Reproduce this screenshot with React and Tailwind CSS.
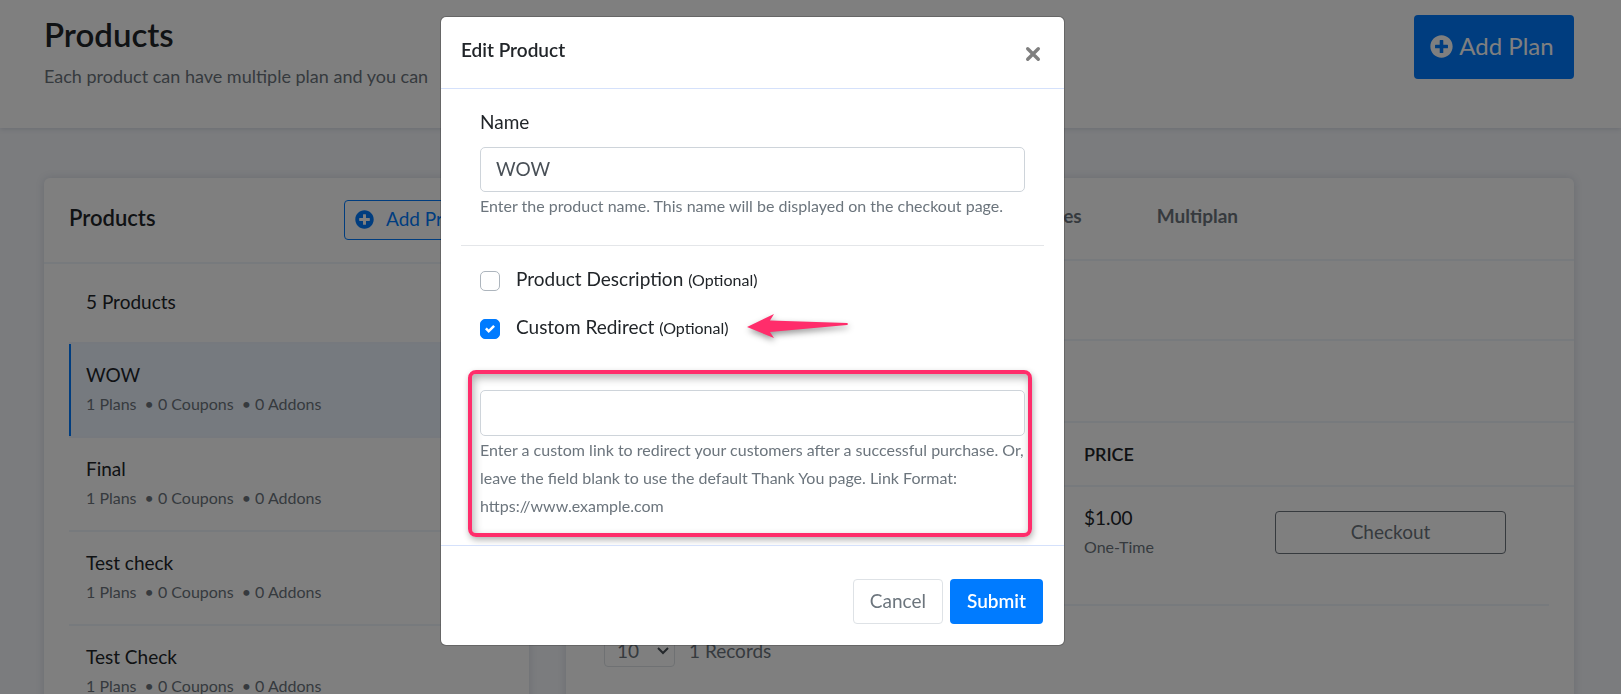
import React, { useState } from 'react'
import { FaPlusCircle } from 'react-icons/fa'

const products = ['WOW', 'Final', 'Test check', 'Test Check']
const tabs = ['Templates', 'Multiplan']

function ProductItem({ name, active, onSelect }) {
  return (
    <li className={active ? 'border-y-2 border-[#edf3fc] bg-[#edf4ff]' : 'border-b-2 border-[#eff4fb]'}>
      <button
        type="button"
        onClick={onSelect}
        className={`flex h-[92px] w-full flex-col justify-center border-l-2 pb-[2px] pl-[15px] text-left ${active ? 'border-[#007bff]' : 'border-transparent'}`}
      >
        <span className="text-[19px] leading-[30px] text-[#212529]">{name}</span>
        <span className="flex gap-2 text-base leading-7 text-[#6c757d]">
          <span>1 Plans</span>
          <span>• 0 Coupons</span>
          <span>• 0 Addons</span>
        </span>
      </button>
    </li>
  )
}

function ProductsCard() {
  const [selected, setSelected] = useState(0)

  return (
    <section className="rounded-md bg-white shadow-[0_0_8px_rgba(30,50,90,0.15)]">
      <div className="flex h-[86px] items-center justify-between border-b-2 border-[#eff4fb] px-[25px]">
        <h2 className="pb-[6px] text-[22px] font-semibold text-[#212529]">Products</h2>
        <button type="button" className="flex h-10 w-40 items-center gap-3 rounded border border-[#007bff] pb-[2px] pl-[10px] text-[19px] text-[#007bff]">
          <FaPlusCircle className="size-[19px]" />
          Add Product
        </button>
      </div>
      <div className="px-[25px]">
        <p className="flex h-[78px] items-center pb-[2px] pl-[17px] text-[19px] text-[#212529]">5 Products</p>
        <ul>
          {products.map((name, i) => (
            <ProductItem key={i} name={name} active={i === selected} onSelect={() => setSelected(i)} />
          ))}
        </ul>
      </div>
    </section>
  )
}

function PlansCard() {
  return (
    <section className="rounded-md bg-white shadow-[0_0_8px_rgba(30,50,90,0.15)]">
      <nav className="flex h-[83px] items-center justify-end gap-[75px] border-b-2 border-[#eff4fb] pr-[336px] pb-[5px] text-[19px] font-bold text-[#6c757d]">
        {tabs.map(tab => <a key={tab} href="#">{tab}</a>)}
      </nav>
      <div className="h-20 border-b-2 border-[#eff4fb]"></div>
      <div className="h-[82px] border-b-2 border-[#eff4fb]"></div>
      <table className="w-full table-fixed text-left text-[#212529]">
        <thead>
          <tr className="h-[63px] border-b-2 border-[#eff4fb] text-lg">
            <th></th>
            <th className="w-[191px] font-semibold">PRICE</th>
            <th className="w-[299px]"></th>
          </tr>
        </thead>
        <tbody>
          <tr className="h-[118px] align-top">
            <td></td>
            <td className="pt-4">
              <div className="text-[19px] leading-[30px]">$1.00</div>
              <div className="text-base leading-7 text-[#6c757d]">One-Time</div>
            </td>
            <td className="pt-6 pr-[68px]">
              <button type="button" className="h-[43px] w-full rounded border border-[#6c757d] text-[19px] text-[#6c757d]">Checkout</button>
            </td>
          </tr>
        </tbody>
      </table>
      <hr className="mx-[25px] border-t-2 border-[#eff4fb]" />
      <div className="flex items-center gap-[14px] px-[38px] pt-[29px] text-[19px] text-[#6c757d]">
        <div className="relative w-[71px]">
          <select aria-label="Records per page" defaultValue="10" className="h-8 w-full appearance-none rounded border border-[#dee2e6] pl-3 text-[#6c757d]">
            <option>10</option>
            <option>25</option>
          </select>
          <svg viewBox="0 0 12 8" className="pointer-events-none absolute top-3 right-[6px] w-3" fill="none" stroke="#495057" strokeWidth="2">
            <path d="M1 1l5 5 5-5" />
          </svg>
        </div>
        <span>1 Records</span>
      </div>
    </section>
  )
}

function CheckOption({ label, checked, onChange, children }) {
  return (
    <div className="flex h-12 items-center">
      <label className="flex items-center">
        <span className="relative mr-4 flex size-5">
          <input
            type="checkbox"
            checked={checked}
            onChange={onChange}
            className="size-5 appearance-none rounded-[5px] border border-[#adb5bd] bg-white checked:border-[#007bff] checked:bg-[#007bff]"
          />
          {checked && (
            <svg viewBox="0 0 8 8" className="pointer-events-none absolute top-[5px] left-[5px] size-[10px]" fill="#fff">
              <path d="M6.564.75l-3.59 3.612-1.538-1.55L0 4.26l2.974 2.99L8 2.193z" />
            </svg>
          )}
        </span>
        <span className="pb-[3px] text-[19px] text-[#212529]">{label} <span className="text-base">(Optional)</span></span>
      </label>
      {children}
    </div>
  )
}

function Arrow() {
  return (
    <svg viewBox="0 0 102 24" className="mb-[6px] ml-[18px] h-6 w-[102px] overflow-visible drop-shadow-[1px_3px_3px_rgba(0,0,0,0.4)]" fill="#ff2d6b">
      <path d="M0 13L27 0l-4 6.500L100 9q2 1 0 2L23 18l4 6z" />
    </svg>
  )
}

function EditProductModal() {
  const [name, setName] = useState('WOW')
  const [link, setLink] = useState('')
  const [description, setDescription] = useState(false)
  const [redirect, setRedirect] = useState(true)

  return (
    <div role="dialog" aria-labelledby="modal-title" className="w-full max-w-[625px] rounded-md border border-black/20 bg-white bg-clip-padding">
      <div className="flex h-[72px] items-center justify-between border-b border-[#d5e1fb] pr-[21px] pl-5">
        <h5 id="modal-title" className="pb-1 text-[19px] font-semibold text-[#212529]">Edit Product</h5>
        <button type="button" aria-label="Close" className="mt-[2px] flex size-5 items-center justify-center">
          <svg viewBox="0 0 16 16" className="size-4" stroke="#7f7f7f" strokeWidth="3.400" strokeLinecap="round">
            <path d="M2.700 2.700l10.600 10.600M13.300 2.700L2.700 13.300" />
          </svg>
        </button>
      </div>

      <form>
        <div className="px-5">
          <div className="border-b border-[#e4e6e9] px-[19px] pt-[18px] pb-[25px]">
            <label htmlFor="name" className="block pb-[10px] text-[19px] leading-[30px] text-[#212529]">Name</label>
            <input id="name" value={name} onChange={e => setName(e.target.value)} className="block h-[45px] w-full rounded-[5px] border border-[#ced4da] px-[15px] pb-[2px] text-[19px] text-[#495057]" />
            <p className="text-base leading-7 text-[#6c757d]">Enter the product name. This name will be displayed on the checkout page.</p>
          </div>

          <div className="px-[19px] pt-[11px]">
            <CheckOption label="Product Description" checked={description} onChange={() => setDescription(!description)} />
            <CheckOption label="Custom Redirect" checked={redirect} onChange={() => setRedirect(!redirect)}>
              <Arrow />
            </CheckOption>
          </div>

          <div className="mt-[17px] mr-3 mb-2 ml-[7px] rounded-lg border-4 border-[#ff2d6b] pt-4 pr-[3px] pb-[13px] pl-2 shadow-[1px_3px_6px_rgba(0,0,0,0.3),inset_2px_4px_8px_rgba(0,0,0,0.3)]">
            <input aria-label="Custom redirect link" value={link} onChange={e => setLink(e.target.value)} className="block h-[46px] w-full rounded-[5px] border border-[#ced4da] bg-white px-[15px] text-[19px] text-[#495057]" />
            <p className="text-base leading-7 text-[#6c757d]">
              Enter a custom link to redirect your customers after a successful purchase. Or, leave the field blank to use the default Thank You page. Link Format: https://www.example.com
            </p>
          </div>
        </div>

        <div className="flex justify-end gap-[7px] border-t border-[#d5e1fb] pt-[33px] pr-[21px] pb-[21px] pl-5">
          <button type="button" className="h-[45px] rounded border border-[#dee2e6] px-4 text-[19px] text-[#6c757d]">Cancel</button>
          <button type="button" className="h-[45px] rounded bg-[#007bff] px-[17px] text-[19px] font-semibold text-white">Submit</button>
        </div>
      </form>
    </div>
  )
}

export default function App() {
  return (
    <div className="h-screen overflow-hidden bg-[#f6f8fc] font-[Lato,'Liberation_Sans',sans-serif]">
      <header className="flex h-32 items-start justify-between bg-white pt-[15px] pr-[47px] pl-11 shadow-[0_1px_5px_rgba(30,50,90,0.15)]">
        <div>
          <h1 className="text-[33px] leading-[38px] font-semibold text-[#212529]">Products</h1>
          <p className="pt-2 text-lg leading-[30px] text-[#6c757d]">Each product can have multiple plan and you can</p>
        </div>
        <button type="button" className="flex h-16 w-40 items-center justify-center gap-[6px] rounded bg-[#007bff] pr-1 pb-[2px] text-2xl text-white">
          <FaPlusCircle className="size-[23px]" />
          Add Plan
        </button>
      </header>

      <main className="grid grid-cols-[485fr_1008fr] gap-[37px] pt-[50px] pr-[47px] pl-11">
        <ProductsCard />
        <PlansCard />
      </main>

      <div className="fixed inset-0 flex items-start justify-center bg-black/50 pt-4 pr-[116px]">
        <EditProductModal />
      </div>
    </div>
  )
}
